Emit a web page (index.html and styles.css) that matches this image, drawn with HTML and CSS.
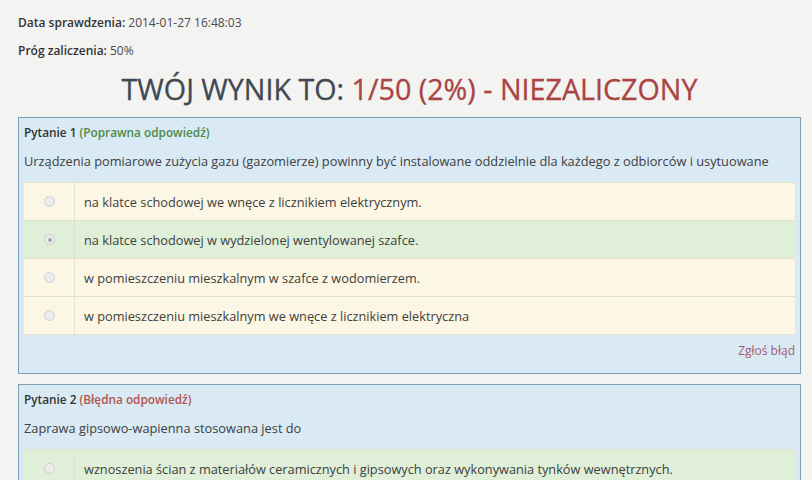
FILE: index.html
```html
<!DOCTYPE html>
<html lang="pl">
<head>
<meta charset="utf-8">
<link rel="stylesheet" href="styles.css">
</head>
<body>
<div class="page">
  <p class="meta"><span class="label">Data sprawdzenia:</span> 2014-01-27 16:48:03</p>
  <p class="meta"><span class="label">Próg zaliczenia:</span> 50%</p>
  <h1 class="result">TWÓJ WYNIK TO: <span class="fail">1/50 (2%) - NIEZALICZONY</span></h1>

  <div class="panel">
    <div class="q-title">Pytanie 1 <span class="ok">(Poprawna odpowiedź)</span></div>
    <div class="q-text">Urządzenia pomiarowe zużycia gazu (gazomierze) powinny być instalowane oddzielnie dla każdego z odbiorców i usytuowane</div>
    <div class="answers">
      <div class="row warn"><div class="radio-cell"><span class="radio"></span></div><div class="ans">na klatce schodowej we wnęce z licznikiem elektrycznym.</div></div>
      <div class="row good"><div class="radio-cell"><span class="radio checked"></span></div><div class="ans">na klatce schodowej w wydzielonej wentylowanej szafce.</div></div>
      <div class="row warn"><div class="radio-cell"><span class="radio"></span></div><div class="ans">w pomieszczeniu mieszkalnym w szafce z wodomierzem.</div></div>
      <div class="row warn"><div class="radio-cell"><span class="radio"></span></div><div class="ans">w pomieszczeniu mieszkalnym we wnęce z licznikiem elektryczna</div></div>
    </div>
    <div class="report"><a href="#">Zgłoś błąd</a></div>
  </div>

  <div class="panel">
    <div class="q-title">Pytanie 2 <span class="bad">(Błędna odpowiedź)</span></div>
    <div class="q-text">Zaprawa gipsowo-wapienna stosowana jest do</div>
    <div class="answers">
      <div class="row good"><div class="radio-cell"><span class="radio"></span></div><div class="ans">wznoszenia ścian z materiałów ceramicznych i gipsowych oraz wykonywania tynków wewnętrznych.</div></div>
    </div>
  </div>
</div>
</body>
</html>
```
FILE: styles.css
```css
html, body {
  margin: 0;
  padding: 0;
  background: #f3f3f2;
  font-family: "Open Sans", "DejaVu Sans", sans-serif;
  color: #404040;
  overflow: hidden;
}
.page {
  padding: 15px 11px 0 18px;
}
.meta {
  margin: 0 0 13px;
  font-size: 12px;
  line-height: 15px;
  color: #4a4a4a;
}
.label {
  font-weight: 600;
  color: #333;
}
.result {
  margin: 9px 0 10px;
  text-align: center;
  font-size: 28.7px;
  line-height: 36px;
  font-weight: 500;
  color: #414850;
  -webkit-text-stroke: 0.3px currentColor;
}
.fail {
  color: #a94442;
}
.panel {
  background: #d9eaf5;
  border: 1px solid #7d9fb5;
  padding: 6px 5px 14px 5px;
  margin-bottom: 10px;
}
.q-title {
  font-size: 11.8px;
  line-height: 14px;
  font-weight: 600;
  color: #333;
  margin-top: 1px;
}
.ok, .bad {
  font-weight: 600;
}
.ok { color: #4e8a4a; }
.bad { color: #b2554f; }
.q-text {
  font-size: 12.8px;
  line-height: 16px;
  margin: 14px 0 13px;
  color: #404040;
}
.answers {
  border-top: 1px solid #e3e0cf;
}
.row {
  display: flex;
  height: 37px;
  border-bottom: 1px solid #e3e0cf;
}
.row.warn { background: #fcf6e4; }
.row.good { background: #dfefd8; }
.radio-cell {
  width: 50px;
  border-right: 1px solid #e3e0cf;
  display: flex;
  align-items: center;
  justify-content: center;
}
.radio {
  width: 9px;
  height: 9px;
  border-radius: 50%;
  border: 1px solid #cfcfcf;
  background: #ececec;
  position: relative;
  margin-left: 1px;
}
.radio.checked::after {
  content: "";
  position: absolute;
  left: 2.5px;
  top: 2.5px;
  width: 4px;
  height: 4px;
  border-radius: 50%;
  background: #a5a5a5;
}
.ans {
  display: flex;
  align-items: center;
  padding-left: 9px;
  font-size: 12.75px;
  color: #404040;
}
.report {
  text-align: right;
  margin-top: 8px;
  font-size: 12px;
  line-height: 16px;
}
.report a {
  color: #a35a6a;
  text-decoration: none;
}
```
